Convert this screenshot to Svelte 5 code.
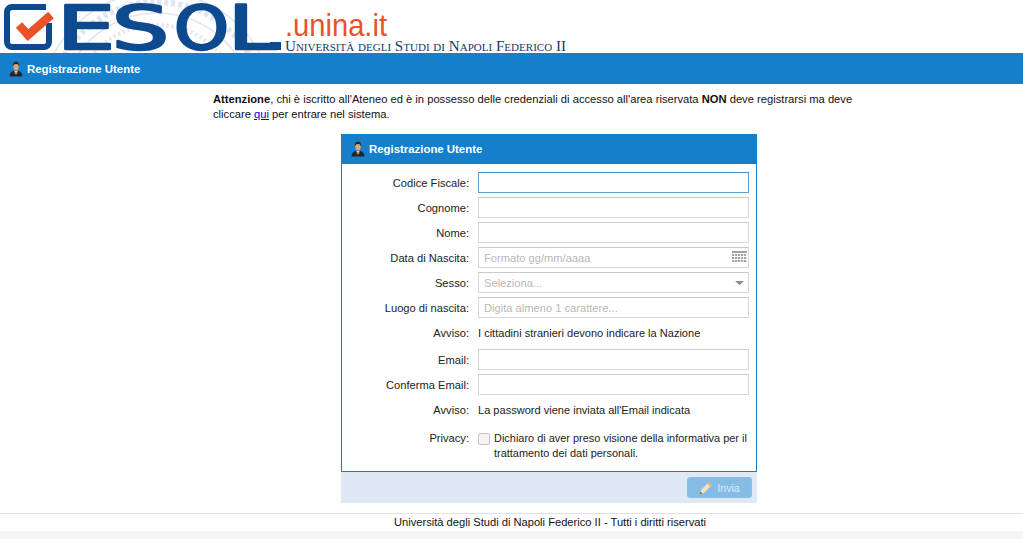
<script>
  const rows = [
    { label: 'Codice Fiscale:', focus: true },
    { label: 'Cognome:' },
    { label: 'Nome:' },
    { label: 'Data di Nascita:', ph: 'Formato gg/mm/aaaa', icon: 'cal' },
    { label: 'Sesso:', ph: 'Seleziona...', icon: 'arrow' },
    { label: 'Luogo di nascita:', ph: 'Digita almeno 1 carattere...' },
    { label: 'Avviso:', text: 'I cittadini stranieri devono indicare la Nazione' },
    { label: 'Email:' },
    { label: 'Conferma Email:' },
    { label: 'Avviso:', text: "La password viene inviata all'Email indicata" }
  ];
  const letters = [
    { c: 'E', x: 57, w: 58 },
    { c: 'S', x: 112, w: 57 },
    { c: 'O', x: 174, w: 55 },
    { c: 'L', x: 228, w: 49 }
  ];
</script>

{#snippet user()}
  <svg class="user" width="16" height="16" viewBox="0 0 16 16">
    <path d="M1.500 15.500c0-3 1.500-4.500 4-5.500h5c2.500 1 4 2.500 4 5.500z" fill="#23252b" />
    <path d="M6.500 10h3l-.5 3H7z" fill="#efe9d8" />
    <path d="M8 10.500l.8 1.200-.8 3.300-.8-3.300z" fill="#9a5a22" />
    <ellipse cx="8" cy="5.500" rx="2.800" ry="4" fill="#d9a878" />
    <path d="M5 5.500C4.600 2 6 .8 8 .8s3.400 1.200 3 4.700c-.5-1.700-1.300-2.500-3-2.500s-2.500.8-3 2.500z" fill="#2f2216" />
  </svg>
{/snippet}

<div class="page">
  <header class="top">
    <svg class="logo" width="600" height="53" viewBox="0 0 600 53">
      <g fill="none" stroke="#e0e6ef">
        <circle cx="157" cy="109" r="117" stroke-width="1.500" />
        <circle cx="157" cy="109" r="107" stroke-width="6" stroke-dasharray="4 3" />
        <circle cx="157" cy="109" r="96" stroke-width="1.500" />
        <circle cx="157" cy="109" r="84" stroke-width="4" stroke-dasharray="2 3" />
      </g>
      <path d="M46 7H12a5 5 0 0 0-5 5v30a5 5 0 0 0 5 5h32a5 5 0 0 0 5-5V23" fill="none" stroke="#0d4a8f" stroke-width="6" />
      <path d="M19 25l9 10 23-20" fill="none" stroke="#ea5228" stroke-width="8.500" />
      {#each letters as l}
        <text class="esol" x={l.x} y="48.500" textLength={l.w} lengthAdjust="spacingAndGlyphs">{l.c}</text>
      {/each}
      <text class="unina" x="285" y="36" textLength="102" lengthAdjust="spacingAndGlyphs">.unina.it</text>
      <text class="uni" x="285" y="51" textLength="281" lengthAdjust="spacingAndGlyphs">Università degli Studi di Napoli Federico II</text>
      <rect x="270" y="42" width="11" height="8" fill="#0d4a8f" />
    </svg>
  </header>

  <div class="bar">
    {@render user()}
    <span>Registrazione Utente</span>
  </div>

  <p class="notice">
    <b>Attenzione</b>, chi è iscritto all'Ateneo ed è in possesso delle credenziali di accesso all'area riservata <b>NON</b> deve registrarsi ma deve cliccare <a href="#qui">qui</a> per entrare nel sistema.
  </p>

  <section class="panel">
    <div class="panel-head">
      {@render user()}
      <span>Registrazione Utente</span>
    </div>
    <div class="panel-body">
      {#each rows as r}
        <div class="row" class:note={r.text}>
          <div class="lab">{r.label}</div>
          {#if r.text}
            <div class="val">{r.text}</div>
          {:else}
            <div class="field" class:focus={r.focus}>
              <span class="ph">{r.ph ?? ''}</span>
              {#if r.icon === 'cal'}
                <svg width="15" height="13" viewBox="0 0 15 13">
                  <rect x="0" y="0" width="15" height="2" fill="#a0a0a0" />
                  {#each [3, 6, 9] as y}
                    {#each [0, 3, 6, 9, 12] as x}
                      <rect {x} {y} width="2.200" height="2" fill="#a5a5a5" />
                    {/each}
                  {/each}
                </svg>
              {:else if r.icon === 'arrow'}
                <svg class="arrow" width="9" height="4" viewBox="0 0 9 4"><path d="M0 0h9L4.500 4z" fill="#8a8a8a" /></svg>
              {/if}
            </div>
          {/if}
        </div>
      {/each}
      <div class="row privacy">
        <div class="lab">Privacy:</div>
        <div class="check">
          <span class="box"></span>
          <span class="check-text">Dichiaro di aver preso visione della informativa per il trattamento dei dati personali.</span>
        </div>
      </div>
    </div>
    <div class="panel-foot">
      <button type="button" class="send">
        <svg width="14" height="14" viewBox="0 0 14 14">
          <path d="M1 13l1-4L10 1l3 3-8 8z" fill="#f3e3b8" />
          <path d="M10 1l3 3-1.500 1.500-3-3z" fill="#e8a878" />
          <path d="M1 13l.6-2.400 1.800 1.800z" fill="#6d5a40" />
        </svg>
        <span>Invia</span>
      </button>
    </div>
  </section>

  <footer class="foot">
    <div class="foot-text">Università degli Studi di Napoli Federico II - Tutti i diritti riservati</div>
    <div class="foot-strip"></div>
  </footer>
</div>

<style>
  :global(body) {
    margin: 0;
    background: #fff;
  }
  .page {
    font: 11.150px "Liberation Sans", Arial, sans-serif;
    color: #222;
    width: 1023px;
    height: 539px;
    overflow: hidden;
  }
  .top {
    height: 53px;
    overflow: hidden;
  }
  .logo {
    display: block;
  }
  .esol {
    font: 60px "DejaVu Sans", sans-serif;
    fill: #0d4a8f;
    stroke: #0d4a8f;
    stroke-width: 2.500px;
    stroke-linejoin: round;
  }
  .unina {
    font: 32px "Liberation Sans", Arial, sans-serif;
    fill: #ea5228;
  }
  .uni {
    font: 15px "Liberation Serif", serif;
    font-variant: small-caps;
    fill: #123a66;
  }
  .bar {
    height: 31px;
    background: #157fcc;
    color: #fff;
    font-size: 11.400px;
    font-weight: bold;
    display: flex;
    align-items: center;
    gap: 3px;
    padding-left: 8px;
  }
  .user {
    flex: none;
  }
  .notice {
    width: 650px;
    margin: 8px 0 0 213px;
    font-size: 11.200px;
    line-height: 15px;
    color: #111;
  }
  .notice a {
    color: #0000ee;
  }
  .panel {
    width: 416px;
    margin: 12px 0 0 341px;
  }
  .panel-head {
    height: 30px;
    background: #157fcc;
    color: #fff;
    font-size: 11.400px;
    font-weight: bold;
    display: flex;
    align-items: center;
    gap: 3px;
    padding-left: 9px;
    box-sizing: border-box;
  }
  .panel-body {
    box-sizing: border-box;
    height: 308px;
    border: 1px solid #157fcc;
    border-top: 0;
    padding-top: 8px;
    background: #fff;
  }
  .row {
    display: flex;
    align-items: center;
    height: 21px;
    margin-bottom: 4px;
  }
  .row.note {
    height: 21px;
    margin-bottom: 6px;
  }
  .lab {
    width: 127px;
    text-align: right;
    flex: none;
    margin-right: 9px;
  }
  .val {
    font-size: 11.050px;
    color: #222;
  }
  .field {
    box-sizing: border-box;
    width: 271px;
    height: 21px;
    border: 1px solid #d8d8d8;
    border-top-color: #cacaca;
    display: flex;
    align-items: center;
    justify-content: space-between;
    padding: 0 1px 0 5px;
  }
  .field.focus {
    border-color: #5f9fd0;
    border-top-color: #3f8bc6;
  }
  .ph {
    color: #b8b8b8;
  }
  .arrow {
    margin-right: 3px;
  }
  .privacy {
    align-items: flex-start;
    height: 34px;
    margin: 11px 0 0;
  }
  .privacy .lab {
    padding-top: 1px;
  }
  .check {
    display: flex;
    gap: 4px;
    width: 276px;
  }
  .box {
    box-sizing: border-box;
    flex: none;
    width: 12px;
    height: 12px;
    margin-top: 2px;
    border: 1px solid #c4c4c4;
    border-radius: 2px;
    background: #f6f4f2;
  }
  .check-text {
    font-size: 10.950px;
    line-height: 15px;
  }
  .panel-foot {
    height: 31px;
    background: #dfe9f3;
    display: flex;
    justify-content: flex-end;
    align-items: flex-start;
    padding: 5px 5px 0 0;
    box-sizing: border-box;
  }
  .send {
    width: 65px;
    height: 21px;
    padding: 0;
    border: 1px solid #87bfe6;
    border-radius: 3px;
    background: #85bce6;
    color: #dbeaf6;
    font: 10.600px "Liberation Sans", Arial, sans-serif;
    display: flex;
    align-items: center;
    justify-content: center;
    gap: 4px;
  }
  .foot {
    margin-top: 10px;
    border-top: 1px solid #e0e0e0;
  }
  .foot-text {
    height: 17px;
    line-height: 17px;
    padding-left: 77px;
    text-align: center;
    color: #111;
  }
  .foot-strip {
    height: 8px;
    background: #f5f5f5;
  }
</style>
